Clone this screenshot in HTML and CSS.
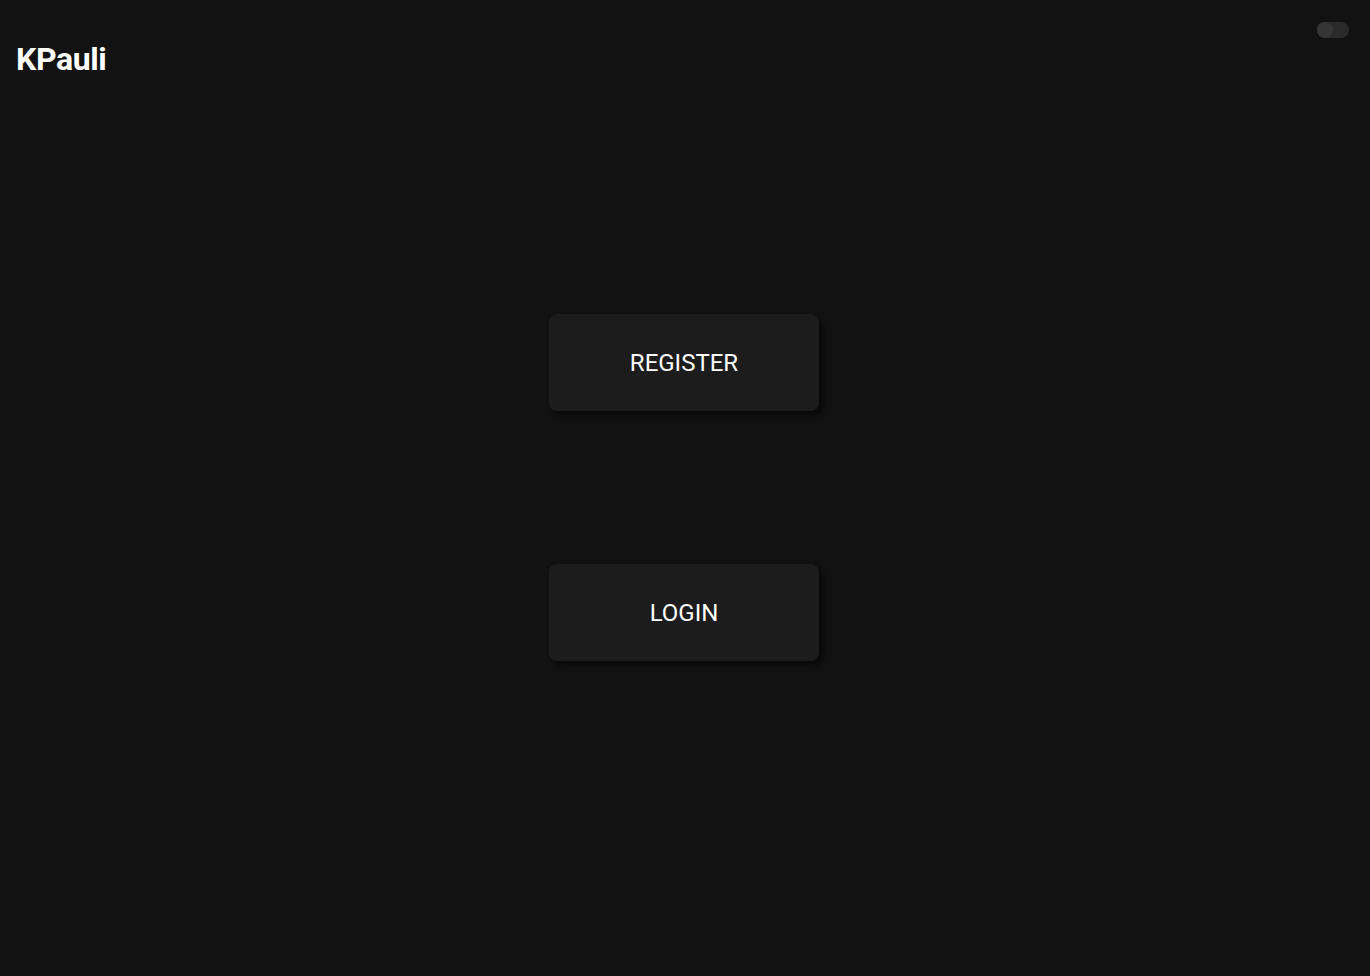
FILE: index.html
```html
<!DOCTYPE html>
<html>
<head>
<meta charset="utf-8">
<link rel="stylesheet" href="styles.css">
</head>
<body>
<div class="page">
  <header class="header">
    <h1 class="title">KPauli</h1>
    <div class="toggle"><span class="knob"></span></div>
  </header>
  <main class="actions">
    <button class="btn">REGISTER</button>
    <button class="btn">LOGIN</button>
  </main>
</div>
</body>
</html>
```
FILE: styles.css
```css
html, body {
  margin: 0;
  padding: 0;
  background: #121212;
  height: 100%;
}
body {
  font-family: Roboto, "Liberation Sans", sans-serif;
  color: #fff;
}
.page {
  position: relative;
  min-height: 100%;
}
.header {
  padding: 40px 16px 0 16px;
}
.title {
  margin: 0;
  font-size: 32px;
  font-weight: 700;
  line-height: 38px;
  letter-spacing: -0.4px;
}
.toggle {
  position: absolute;
  top: 22px;
  right: 21px;
  width: 32px;
  height: 16px;
  border-radius: 8px;
  background: #2a2a2a;
}
.knob {
  position: absolute;
  left: 0;
  top: 0;
  width: 16px;
  height: 16px;
  border-radius: 50%;
  background: #353535;
}
.actions {
  display: flex;
  flex-direction: column;
  align-items: center;
  gap: 153px;
  padding-top: 236px;
  padding-right: 2px;
}
.btn {
  width: 270px;
  height: 97px;
  border: none;
  border-radius: 8px;
  background: #1c1c1c;
  color: #fff;
  font-family: Roboto, "Liberation Sans", sans-serif;
  font-size: 24px;
  font-weight: 400;
  letter-spacing: 0;
  box-shadow: 4px 4px 6px rgba(0,0,0,0.6);
  cursor: pointer;
}
```
